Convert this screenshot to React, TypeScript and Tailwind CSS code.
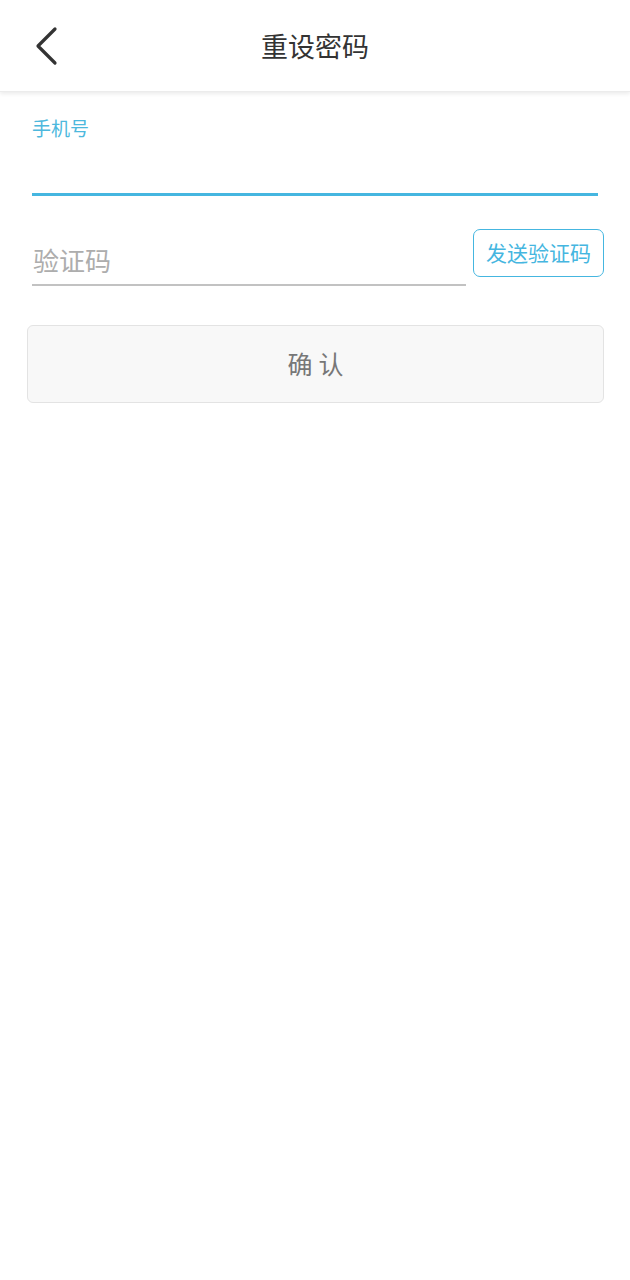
import React from "react";

const font = { fontFamily: '"Noto Sans CJK SC", "Noto Sans", sans-serif' };

export default function App() {
  return (
    <div className="w-[630px] h-[1280px] bg-white" style={font}>
      <div className="relative h-[92px] flex items-center justify-center bg-white shadow-[0_2px_4px_rgba(0,0,0,0.08)] border-b border-[#ececec]">
        <svg
          className="absolute left-[32px] top-[26px]"
          width="30"
          height="40"
          viewBox="0 0 30 40"
          fill="none"
        >
          <path d="M23 3 L6 20 L23 37" stroke="#333" strokeWidth="3.2" strokeLinecap="round" strokeLinejoin="round" />
        </svg>
        <span className="text-[27px] leading-none text-[#333]">重设密码</span>
      </div>

      <div className="px-[32px]">
        <div className="pt-[25px]">
          <div className="text-[19px] leading-[22px] text-[#4db8dd]">手机号</div>
          <div className="mt-[54px] h-[3px] bg-[#45b6e0] w-[566px]" />
        </div>

        <div className="mt-[33px] flex items-start w-[572px]">
          <div className="w-[434px] shrink-0 pt-[16px]">
            <div className="text-[26px] leading-[30px] text-[#adadad] pl-[1px]">验证码</div>
            <div className="mt-[9px] h-[2px] bg-[#c2c2c2]" />
          </div>
          <div className="ml-[7px] shrink-0 w-[131px] h-[48px] rounded-[7px] border-[1.5px] border-[#45b6e0] flex items-center justify-center text-[21px] text-[#45b6e0]">
            发送验证码
          </div>
        </div>

        <div className="mt-[39px] -ml-[5px] w-[577px] h-[78px] rounded-[6px] border border-[#e3e3e3] bg-[#f8f8f8] flex items-center justify-center">
          <span className="text-[25px] text-[#777] tracking-[6px] pl-[6px]">确认</span>
        </div>
      </div>
    </div>
  );
}
